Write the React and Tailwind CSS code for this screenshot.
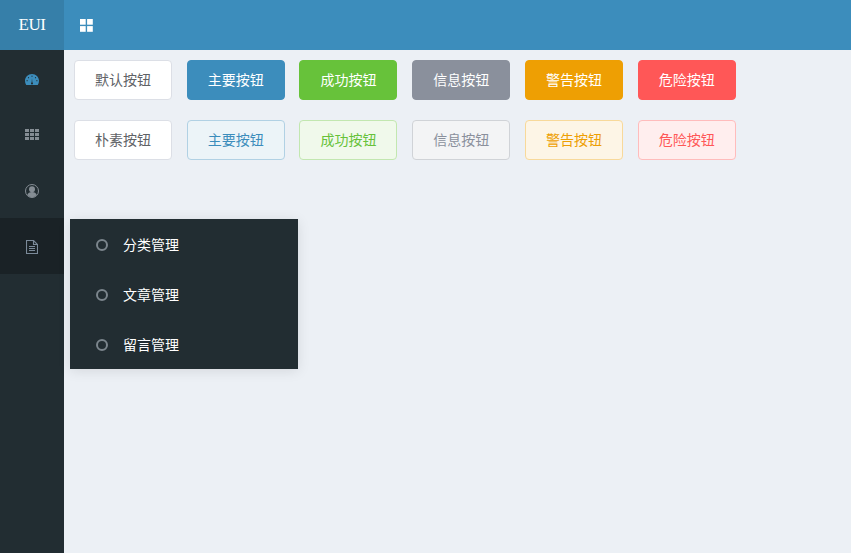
import React from 'react';

const CJK = "font-['Liberation_Sans','Noto_Sans_CJK_SC',sans-serif]";

const solidButtons = [
    { label: '默认按钮', cls: 'bg-white border-[#dcdfe6] text-[#606266]' },
    { label: '主要按钮', cls: 'bg-[#3c8dbc] border-[#3c8dbc] text-white' },
    { label: '成功按钮', cls: 'bg-[#67c23a] border-[#67c23a] text-white' },
    { label: '信息按钮', cls: 'bg-[#8a909c] border-[#8a909c] text-white' },
    { label: '警告按钮', cls: 'bg-[#ee9f03] border-[#ee9f03] text-white' },
    { label: '危险按钮', cls: 'bg-[#ff5757] border-[#ff5757] text-white' },
];

const plainButtons = [
    { label: '朴素按钮', cls: 'bg-white border-[#dcdfe6] text-[#606266]' },
    { label: '主要按钮', cls: 'bg-[#ecf4f8] border-[#b1d1e4] text-[#3c8dbc]' },
    { label: '成功按钮', cls: 'bg-[#f0f9eb] border-[#c2e7b0] text-[#67c23a]' },
    { label: '信息按钮', cls: 'bg-[#f3f4f5] border-[#d0d3d7] text-[#8a909c]' },
    { label: '警告按钮', cls: 'bg-[#fdf5e6] border-[#f8d99a] text-[#ee9f03]' },
    { label: '危险按钮', cls: 'bg-[#ffeeee] border-[#ffbcbc] text-[#ff5757]' },
];

const subMenu = ['分类管理', '文章管理', '留言管理'];

function DashboardIcon() {
    return (
        <svg width="14" height="11" viewBox="0 0 14 11" className="text-[#3c8dbc]">
            <path fill="currentColor" fillRule="evenodd" d="M7 0C3.100 0 0 3 0 6.800c0 1.500.4 2.900 1.100 4 .1.100.2.200.4.200h11c.2 0 .3-.1.4-.2.7-1.100 1.100-2.500 1.100-4C14 3 10.900 0 7 0zM2.100 7.300a.6.6 0 1 1 0-1.200.6.6 0 0 1 0 1.200zm1.400-3a.6.6 0 1 1 0-1.200.6.6 0 0 1 0 1.200zM7 2.800a.6.6 0 1 1 0-1.200.6.6 0 0 1 0 1.200zm3.500 1.500a.6.6 0 1 1 0-1.200.6.6 0 0 1 0 1.200zm1.400 3a.6.6 0 1 1 0-1.200.6.6 0 0 1 0 1.200zM8 9.400a1 1 0 0 1-2 0c0-.4.200-.8.600-.9L7 4.200l.4 4.300c.4.100.6.500.6.900z" />
        </svg>
    );
}

function GridIcon() {
    return (
        <svg width="14" height="11" viewBox="0 0 14 11" fill="#858d94">
            {[0, 4, 8].map(y => [0, 5, 10].map(x => (
                <rect key={`${x}-${y}`} x={x} y={y} width="4" height="3" />
            )))}
        </svg>
    );
}

function UserCircleIcon() {
    return (
        <svg width="14" height="14" viewBox="0 0 14 14">
            <circle cx="7" cy="7" r="6.500" fill="none" stroke="#858d94" strokeWidth="1" />
            <circle cx="7" cy="5.200" r="3" fill="#858d94" />
            <path fill="#858d94" d="M2.300 11C2.800 9 4.600 8 7 8s4.200 1 4.700 3A6.200 6.200 0 0 1 7 13.300 6.200 6.200 0 0 1 2.300 11z" />
        </svg>
    );
}

function FileIcon() {
    return (
        <svg width="12" height="14" viewBox="0 0 12 14" fill="none" stroke="#7b8a99" strokeWidth="1.100">
            <path d="M.5.500h7l4 4v9H.5z" />
            <path d="M7.500.500v4h4M3 6.500h6M3 8.500h6M3 10.500h6" />
        </svg>
    );
}

function ToggleIcon() {
    return (
        <svg width="13" height="13" viewBox="0 0 13 13" fill="white">
            <rect x="0" y="0" width="5.700" height="5.700" />
            <rect x="7.100" y="0" width="5.700" height="5.700" />
            <rect x="0" y="7.100" width="5.700" height="5.700" />
            <rect x="7.100" y="7.100" width="5.700" height="5.700" />
        </svg>
    );
}

function ButtonRow({ items }) {
    return (
        <div className="flex gap-[14.74px]">
            {items.map(b => (
                <button key={b.label} className={`w-[98px] h-10 shrink-0 border rounded text-sm ${b.cls}`}>
                    {b.label}
                </button>
            ))}
        </div>
    );
}

export default function App() {
    return (
        <div className={`h-screen flex flex-col bg-[#ecf0f5] overflow-hidden relative ${CJK}`}>
            <header className="h-[50px] shrink-0 flex bg-[#3c8dbc]">
                <div className="w-16 flex items-center justify-center bg-[#367fa9] text-white text-[17px] tracking-[-0.5px] font-['Liberation_Serif',serif]">EUI</div>
                <div className="flex items-center pl-4"><ToggleIcon /></div>
            </header>

            <div className="flex-1 flex min-h-0">
                <aside className="w-16 shrink-0 bg-[#222d32]">
                    <div className="h-14 pt-[3px] flex items-center justify-center"><DashboardIcon /></div>
                    <div className="h-14 pt-px flex items-center justify-center"><GridIcon /></div>
                    <div className="h-14 pt-0.5 flex items-center justify-center"><UserCircleIcon /></div>
                    <div className="h-14 pt-0.5 flex items-center justify-center bg-[#1a2226]"><FileIcon /></div>
                </aside>

                <main className="flex-1 pt-2.5 pl-2.5 flex flex-col gap-5">
                    <ButtonRow items={solidButtons} />
                    <ButtonRow items={plainButtons} />
                </main>
            </div>

            {/* всплывающее подменю */}
            <div className="absolute left-[70px] top-[219px] w-[228px] bg-[#222d32] shadow-[0_2px_12px_rgba(0,0,0,0.1)]">
                {subMenu.map(item => (
                    <div key={item} className="h-[50px] pt-0.5 flex items-center pl-[26px] text-white text-sm">
                        <span className="w-3 h-3 rounded-full border-2 border-[#7b858c] mr-[15px]"></span>
                        {item}
                    </div>
                ))}
            </div>
        </div>
    );
}
